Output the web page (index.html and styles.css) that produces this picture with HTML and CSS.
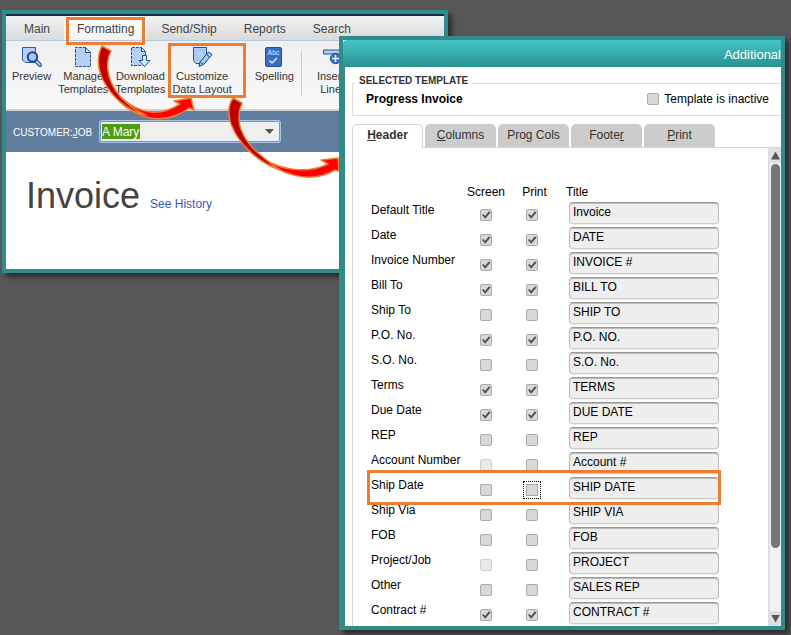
FILE: index.html
```html
<!DOCTYPE html>
<html lang="en">
<head>
<meta charset="utf-8">
<title>Invoice formatting</title>
<link rel="stylesheet" href="styles.css">
</head>
<body>
<main class="desktop">
  <section class="window invoice-window">
    <nav class="menu">
      <button type="button">Main</button>
      <button type="button" class="active">Formatting</button>
      <button type="button">Send/Ship</button>
      <button type="button">Reports</button>
      <button type="button">Search</button>
    </nav>
    <div class="toolbar">
      <button type="button" class="tool">
        <svg width="22" height="22" viewBox="0 0 22 22"><path d="M1.500 1.500h13v15H4l-2.500-2.500z" fill="#b4d0f6" stroke="#2b5fae"/><path d="M14.500 14.500l4.500 4.500" stroke="#24508f" stroke-width="4" stroke-linecap="round"/><path d="M15.500 15.500l3.300 3.300" stroke="#a8c8ee" stroke-width="2" stroke-linecap="round"/><circle cx="11.500" cy="11" r="4.700" fill="#a9c8f2" stroke="#1c4587" stroke-width="2"/></svg>
        <span>Preview</span>
      </button>
      <button type="button" class="tool">
        <svg width="22" height="22" viewBox="0 0 22 22"><path d="M3.500 1.500h10l5 5v14h-15z" fill="#b4d0f6"/><path d="M3.500 6V1.500h10l5 5v14h-15V6" fill="none" stroke="#24508f" stroke-dasharray="3 1"/><path d="M13.500 1.500v5h5z" fill="#eef5ff" stroke="#24508f"/></svg>
        <span>Manage<br>Templates</span>
      </button>
      <button type="button" class="tool">
        <svg width="22" height="22" viewBox="0 0 22 22"><path d="M2.500 1.500h10l4 4v14h-14z" fill="#b4d0f6"/><path d="M12 19.500H2.500v-18h10l4 4v5" fill="none" stroke="#24508f" stroke-dasharray="3 1"/><path d="M12.500 1.500v4h4z" fill="#eef5ff" stroke="#24508f"/><path d="M13.500 9.500h4v5h3.500l-5.500 6-5.500-6h3.500z" fill="#d5e6fb" stroke="#24508f"/></svg>
        <span>Download<br>Templates</span>
      </button>
      <button type="button" class="tool">
        <svg width="22" height="22" viewBox="0 0 22 22"><path d="M2.500 1.500h13v14l-2 2H5l-2.500-3z" fill="#b4d0f6" stroke="#24508f"/><path d="M5 4h8v10H5z" fill="none" stroke="#7da5df" stroke-dasharray="1 1"/><path d="M17.500 6l3.500 2.500-8.500 10-4.500 2 1-4.500z" fill="#a9c8f2" stroke="#1c4587"/><path d="M15.500 8.500l3.300 2.600M9.500 16l2.700 2.200" stroke="#1c4587"/></svg>
        <span>Customize<br>Data Layout</span>
      </button>
      <button type="button" class="tool spelling">
        <svg width="22" height="22" viewBox="0 0 22 22"><rect x="2.500" y="1.500" width="16" height="19" rx="1.500" fill="#3b6dc4" stroke="#24508f"/><text x="10.500" y="9" class="abc">Abc</text><path d="M6.500 14.500l2.500 2.500 5-5" fill="none" stroke="#dce9fb" stroke-width="1.500"/></svg>
        <span>Spelling</span>
      </button>
      <i class="divider"></i>
      <button type="button" class="tool insert">
        <svg width="22" height="22" viewBox="0 0 22 22"><path d="M3.500 4h18v4h-18z" fill="#b7cff2" stroke="#24508f"/><circle cx="15.500" cy="12.500" r="5.200" fill="#3c72c8" stroke="#24508f"/><path d="M12 12.500h7M15.500 9v7" stroke="#e8f1ff" stroke-width="1.500"/></svg>
        <span>Insert<br>Line</span>
      </button>
    </div>
    <div class="customer-bar">
      <label for="customer">CUSTOMER:<u>J</u>OB</label>
      <div class="combo">
        <input id="customer" type="text" value="A Mary">
        <button type="button" aria-label="Open customer list"></button>
      </div>
    </div>
    <div class="title-row">
      <h1>Invoice</h1>
      <a href="#history">See History</a>
    </div>
  </section>

  <svg class="annotations" width="460" height="280" viewBox="0 0 460 280" aria-hidden="true">
    <g fill="none" stroke="#ed7d31" stroke-width="3">
      <rect x="67.500" y="18.500" width="76" height="25"/>
      <rect x="169.500" y="44.500" width="75" height="52"/>
    </g>
    <g stroke="#ed7d31" stroke-width="1.500" stroke-linejoin="round">
      <path fill="#f00" d="M113 94C130 116 155 124 177 115Q184 112 189 108L194 110L191 98L174 101L180 104C160 117 139 114 122 98Z"/>
      <path fill="#c00000" d="M102 46L111 51C104 64 107 87 128 104C136 111 141 113 146 115C128 112 111 96 103 80C96 65 98 54 102 46Z"/>
      <path fill="#f00" d="M262 158C280 174 310 185 335 170L339 171L338 158L321 160L328 164C310 173 284 172 262 158Z"/>
      <path fill="#c00000" d="M233 98L242 103C235 119 239 139 264 158C270 163 275 167 280 170C258 162 239 145 231 124C227 112 229 104 233 98Z"/>
    </g>
  </svg>

  <section class="window dialog">
    <header>Additional</header>
    <div class="dialog-body">
      <fieldset>
        <legend>SELECTED TEMPLATE</legend>
        <div class="template-row">
          <strong>Progress Invoice</strong>
          <label><input type="checkbox"> Template is inactive</label>
        </div>
      </fieldset>
      <div class="tabs" role="tablist">
        <button type="button" role="tab" aria-selected="true"><u>H</u>eader</button>
        <button type="button" role="tab"><u>C</u>olumns</button>
        <button type="button" role="tab">Pro<u>g</u> Cols</button>
        <button type="button" role="tab">Foote<u>r</u></button>
        <button type="button" role="tab"><u>P</u>rint</button>
      </div>
      <div class="panel">
        <table>
          <thead><tr><th class="name"></th><th class="tick">Screen</th><th class="tick print-head">Print</th><th>Title</th></tr></thead>
          <tbody>
            <tr><td>Default Title</td><td><input type="checkbox" aria-label="Default Title on screen" checked></td><td><input type="checkbox" aria-label="Default Title in print" checked></td><td><input type="text" aria-label="Default Title title" value="Invoice"></td></tr>
            <tr><td>Date</td><td><input type="checkbox" aria-label="Date on screen" checked></td><td><input type="checkbox" aria-label="Date in print" checked></td><td><input type="text" aria-label="Date title" value="DATE"></td></tr>
            <tr><td>Invoice Number</td><td><input type="checkbox" aria-label="Invoice Number on screen" checked></td><td><input type="checkbox" aria-label="Invoice Number in print" checked></td><td><input type="text" aria-label="Invoice Number title" value="INVOICE #"></td></tr>
            <tr><td>Bill To</td><td><input type="checkbox" aria-label="Bill To on screen" checked></td><td><input type="checkbox" aria-label="Bill To in print" checked></td><td><input type="text" aria-label="Bill To title" value="BILL TO"></td></tr>
            <tr><td>Ship To</td><td><input type="checkbox" aria-label="Ship To on screen"></td><td><input type="checkbox" aria-label="Ship To in print"></td><td><input type="text" aria-label="Ship To title" value="SHIP TO"></td></tr>
            <tr><td>P.O. No.</td><td><input type="checkbox" aria-label="P.O. No. on screen" checked></td><td><input type="checkbox" aria-label="P.O. No. in print" checked></td><td><input type="text" aria-label="P.O. No. title" value="P.O. NO."></td></tr>
            <tr><td>S.O. No.</td><td><input type="checkbox" aria-label="S.O. No. on screen"></td><td><input type="checkbox" aria-label="S.O. No. in print"></td><td><input type="text" aria-label="S.O. No. title" value="S.O. No."></td></tr>
            <tr><td>Terms</td><td><input type="checkbox" aria-label="Terms on screen" checked></td><td><input type="checkbox" aria-label="Terms in print" checked></td><td><input type="text" aria-label="Terms title" value="TERMS"></td></tr>
            <tr><td>Due Date</td><td><input type="checkbox" aria-label="Due Date on screen" checked></td><td><input type="checkbox" aria-label="Due Date in print" checked></td><td><input type="text" aria-label="Due Date title" value="DUE DATE"></td></tr>
            <tr><td>REP</td><td><input type="checkbox" aria-label="REP on screen"></td><td><input type="checkbox" aria-label="REP in print"></td><td><input type="text" aria-label="REP title" value="REP"></td></tr>
            <tr><td>Account Number</td><td><input type="checkbox" aria-label="Account Number on screen" disabled></td><td><input type="checkbox" aria-label="Account Number in print"></td><td><input type="text" aria-label="Account Number title" value="Account #"></td></tr>
            <tr class="highlight"><td>Ship Date</td><td><input type="checkbox" aria-label="Ship Date on screen"></td><td><input type="checkbox" class="current" aria-label="Ship Date in print"></td><td><input type="text" aria-label="Ship Date title" value="SHIP DATE"></td></tr>
            <tr><td>Ship Via</td><td><input type="checkbox" aria-label="Ship Via on screen"></td><td><input type="checkbox" aria-label="Ship Via in print"></td><td><input type="text" aria-label="Ship Via title" value="SHIP VIA"></td></tr>
            <tr><td>FOB</td><td><input type="checkbox" aria-label="FOB on screen"></td><td><input type="checkbox" aria-label="FOB in print"></td><td><input type="text" aria-label="FOB title" value="FOB"></td></tr>
            <tr><td>Project/Job</td><td><input type="checkbox" aria-label="Project/Job on screen" disabled></td><td><input type="checkbox" aria-label="Project/Job in print"></td><td><input type="text" aria-label="Project/Job title" value="PROJECT"></td></tr>
            <tr><td>Other</td><td><input type="checkbox" aria-label="Other on screen"></td><td><input type="checkbox" aria-label="Other in print"></td><td><input type="text" aria-label="Other title" value="SALES REP"></td></tr>
            <tr><td>Contract #</td><td><input type="checkbox" aria-label="Contract # on screen" checked></td><td><input type="checkbox" aria-label="Contract # in print" checked></td><td><input type="text" aria-label="Contract # title" value="CONTRACT #"></td></tr>
          </tbody>
        </table>
        <div class="scrollbar">
          <button type="button" class="up" aria-label="Scroll up"></button>
          <div class="track"><div class="thumb"></div></div>
          <button type="button" class="down" aria-label="Scroll down"></button>
        </div>
      </div>
    </div>
  </section>
</main>
</body>
</html>
```
FILE: styles.css
```css
* { box-sizing: border-box; }

body {
  margin: 0;
  background: #575757;
  font: 12px/16px "Liberation Sans", Arial, sans-serif;
  color: #000;
}

button, input {
  margin: 0;
  padding: 0;
  border: 0;
  font: inherit;
  color: inherit;
  background: none;
}

.desktop {
  position: relative;
  min-height: 100vh;
  overflow: hidden;
}

.window {
  position: absolute;
  border: 4px solid #318b8a;
  background: #fff;
  box-shadow: 4px 4px 5px rgba(0, 0, 0, 0.5);
}

/* Invoice window */
.invoice-window {
  left: 2px;
  top: 10px;
  width: 446px;
  padding-bottom: 52px;
}

.menu {
  display: flex;
  gap: 1px;
  height: 27px;
  padding-left: 5px;
  border-top: 2px solid #182c4a;
  border-bottom: 1px solid #b4c8e0;
  background: linear-gradient(#f2f2f2, #dadada);
}

.menu button { padding: 2px 13px 0; color: #444; }
.menu .active { background: linear-gradient(#fff, #f2f2f2); }

.toolbar {
  display: flex;
  align-items: flex-start;
  gap: 7px;
  height: 70px;
  padding: 5px 0 0 6px;
  border-bottom: 2px solid #d0d0d0;
  background: linear-gradient(#f0f0f0, #f8f8f8);
  overflow: hidden;
}

.tool {
  display: flex;
  flex-direction: column;
  align-items: center;
  gap: 2px;
  font-size: 11px;
  line-height: 13px;
  color: #333;
  white-space: nowrap;
}

.spelling { margin-left: 16px; }
.insert { margin-left: 8px; }
.abc { font-size: 7px; fill: #dce9fb; text-anchor: middle; }

.divider {
  width: 1px;
  height: 45px;
  margin-top: 5px;
  background: #ccc;
}

.customer-bar {
  display: flex;
  align-items: center;
  gap: 4px;
  height: 41px;
  padding-left: 7px;
  background: #627e9e;
}

.customer-bar label {
  width: 82px;
  font-size: 10px;
  color: #fff;
  padding-top: 3px;
  white-space: nowrap;
}

.combo {
  display: flex;
  justify-content: space-between;
  width: 182px;
  height: 23px;
  padding: 1px 6px 1px 2px;
  border: 1px solid #a9c4e8;
  border-radius: 3px;
  outline: 1px solid #6d93d8;
  outline-offset: -2px;
  background: #efefef;
}

.combo input {
  width: 38px;
  height: 15px;
  margin-top: 2px;
  background: #4f9a18;
  color: #fff;
}

.combo button {
  align-self: center;
  width: 9px;
  height: 5px;
  background: #555;
  clip-path: polygon(0 0, 100% 0, 50% 100%);
}

.title-row {
  display: flex;
  align-items: baseline;
  gap: 10px;
  padding: 23px 0 0 20px;
}

h1 {
  margin: 0;
  font-size: 36px;
  line-height: 42px;
  font-weight: 400;
  color: #444;
}

.title-row a { color: #3558b8; text-decoration: none; }

.annotations {
  position: absolute;
  left: 0;
  top: 0;
  pointer-events: none;
}

/* Template dialog */
.dialog {
  left: 339px;
  right: 6px;
  top: 36px;
}

.dialog header {
  height: 27px;
  padding: 7px 0 0;
  border-top-left-radius: 4px;
  background: linear-gradient(#44c5c5, #279390);
  font-size: 13px;
  text-align: right;
  color: #fff;
}

.dialog-body {
  padding: 8px 0 0 7px;
  border-left: 2px solid #318b8a;
}

fieldset {
  min-width: 0;
  margin: 0;
  padding: 0 12px 8px 13px;
  border: 1px solid #ddd;
  border-right: 0;
}

legend {
  margin-left: -11px;
  padding: 0 4px 4px;
  font-size: 10px;
  line-height: 12px;
  font-weight: 700;
  color: #333;
}

.template-row {
  display: flex;
  justify-content: space-between;
}

.template-row label {
  display: flex;
  align-items: center;
  gap: 5px;
}

.tabs {
  display: flex;
  gap: 2px;
  margin-top: 8px;
  border-bottom: 1px solid #d5d5d5;
}

.tabs button {
  width: 71px;
  height: 23px;
  padding-bottom: 2px;
  border-radius: 5px 5px 0 0;
  background: #ccc;
  color: #333;
}

.tabs button[aria-selected] {
  height: 24px;
  margin-bottom: -1px;
  padding-bottom: 4px;
  border: 1px solid #d5d5d5;
  border-bottom: 0;
  background: #fff;
  font-weight: 700;
}

.panel {
  display: flex;
  justify-content: space-between;
  border-left: 1px solid #d5d5d5;
}

table {
  width: 350px;
  margin: 36px 0 1px 18px;
  table-layout: fixed;
  border-collapse: collapse;
}

th { padding: 0; font-weight: 400; text-align: left; }
.name { width: 92px; }
.tick { width: 46px; text-align: center; }
.print-head { width: 57px; padding-right: 6px; }

td { height: 25px; padding: 0; vertical-align: top; line-height: 20px; }
td:nth-child(2), td:nth-child(3) { padding: 9px 0 0 17px; line-height: 12px; }
td:nth-child(4) { padding: 2px 0 0 3px; }

input[type="checkbox"] {
  display: block;
  appearance: none;
  width: 12px;
  height: 12px;
  border: 1px solid #aaa;
  border-radius: 2px;
  background: #d8d8d8;
}

input[type="checkbox"]:checked::before {
  content: "";
  display: block;
  width: 10px;
  height: 10px;
  background: #505050;
  clip-path: polygon(10% 50%, 25% 40%, 40% 60%, 80% 12%, 95% 25%, 42% 88%);
}

input[type="checkbox"]:disabled { border-color: #d0d0d0; background: #e8e8e8; }
input[type="checkbox"].current { border-radius: 0; outline: 1px dotted #000; outline-offset: 2px; }

td input[type="text"] {
  display: block;
  width: 150px;
  height: 22px;
  padding: 0 3px 2px;
  border: 1px solid #bbb;
  border-top-color: #999;
  border-bottom-color: #ccc;
  border-radius: 4px;
  background: #eee;
  box-shadow: inset 0 1px #bbb, 0 1px 1px #eee;
}

.highlight { position: relative; }
.highlight::after {
  content: "";
  position: absolute;
  inset: -5px 0 -5px -4px;
  border: 3px solid #ed7d31;
  pointer-events: none;
}

.scrollbar {
  display: flex;
  flex-direction: column;
  width: 13px;
  border-left: 2px solid #ddd;
  background: #f2f2f2;
}

.scrollbar button { height: 15px; background: #e0e0e0; }
.scrollbar button::before {
  content: "";
  display: block;
  width: 9px;
  height: 8px;
  margin: 0 auto;
  background: #555;
}
.up::before { clip-path: polygon(50% 0, 100% 100%, 0 100%); }
.down::before { clip-path: polygon(0 0, 100% 0, 50% 100%); }

.track { flex: 1; padding: 1px; }
.thumb { height: 86%; border-radius: 5px; background: #727878; }
```
